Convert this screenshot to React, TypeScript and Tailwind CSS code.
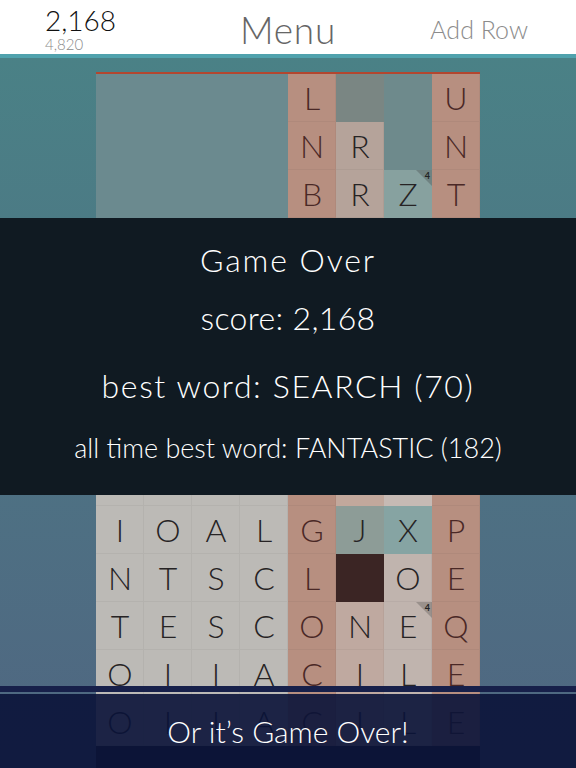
import React from "react";

type Cell = { l?: string; k: string; corner?: string };

const BG: Record<string, string> = {
  e: "bg-[#6b8a8f]",
  s: "bg-[#b78f80] shadow-[inset_-1px_-1px_0_rgba(0,0,0,0.04)]",
  r1: "bg-[#7a8683]",
  e2: "bg-[#6e8a8c]",
  rp: "bg-[#b5a39a] shadow-[inset_-1px_-1px_0_rgba(0,0,0,0.04)]",
  z: "bg-[#87a19f]",
  g: "bg-[#bcbab6] shadow-[inset_-1px_-1px_0_rgba(0,0,0,0.04)]",
  pk: "bg-[#bfa9a0] shadow-[inset_-1px_-1px_0_rgba(0,0,0,0.04)]",
  lg: "bg-[#c0b4ae] shadow-[inset_-1px_-1px_0_rgba(0,0,0,0.04)]",
  pk9: "bg-[#c2a89c]",
  lg9: "bg-[#c6bab4]",
  j: "bg-[#8d9c97]",
  x: "bg-[#86a4a3]",
  d: "bg-[#3b2524]",
};

const TXT: Record<string, string> = {
  s: "text-[#4a2826]",
  d: "text-[#4a2826]",
};

const c = (k: string, l?: string, corner?: string): Cell => ({ k, l, corner });

const rows: Cell[][] = [
  [c("e"), c("e"), c("e"), c("e"), c("s", "L"), c("r1"), c("e2"), c("s", "U")],
  [c("e"), c("e"), c("e"), c("e"), c("s", "N"), c("rp", "R"), c("e2"), c("s", "N")],
  [c("e"), c("e"), c("e"), c("e"), c("s", "B"), c("rp", "R"), c("z", "Z", "4"), c("s", "T")],
  [c("e"), c("e"), c("e"), c("e"), c("s"), c("e"), c("e"), c("s")],
  [c("e"), c("e"), c("e"), c("e"), c("s"), c("e"), c("e"), c("s")],
  [c("g"), c("g"), c("g"), c("g"), c("s"), c("e"), c("e"), c("s")],
  [c("g"), c("g"), c("g"), c("g"), c("s"), c("e"), c("e"), c("s")],
  [c("g"), c("g"), c("g"), c("g"), c("s"), c("pk9"), c("lg9"), c("s")],
  [c("g"), c("g"), c("g"), c("g"), c("s"), c("pk9"), c("lg9"), c("s")],
  [c("g", "I"), c("g", "O"), c("g", "A"), c("g", "L"), c("s", "G"), c("j", "J"), c("x", "X"), c("s", "P")],
  [c("g", "N"), c("g", "T"), c("g", "S"), c("g", "C"), c("s", "L"), c("d"), c("lg", "O"), c("s", "E")],
  [c("g", "T"), c("g", "E"), c("g", "S"), c("g", "C"), c("s", "O"), c("pk", "N"), c("lg", "E", "4"), c("s", "Q")],
  [c("g", "O"), c("g", "I"), c("g", "I"), c("g", "A"), c("s", "C"), c("pk", "I"), c("lg", "L"), c("s", "E")],
  [c("g", "O"), c("g", "I"), c("g", "I"), c("g", "A"), c("s", "C"), c("pk", "I"), c("lg", "L"), c("s", "E")],
];

function Tile({ cell }: { cell: Cell }) {
  return (
    <div className={`relative h-[48px] w-[48px] flex items-center justify-center ${BG[cell.k]}`}>
      {cell.l && (
        <span className={`text-[32px] leading-none font-light ${TXT[cell.k] ?? "text-[#262324]"}`}>{cell.l}</span>
      )}
      {cell.corner && (
        <>
          <div className="absolute top-0 right-0 w-[16px] h-[16px] bg-[rgba(40,40,40,0.25)] [clip-path:polygon(0_0,100%_0,100%_100%)]" />
          <span className="absolute top-[1px] right-[2px] text-[9px] leading-none font-bold text-[#222]">
            {cell.corner}
          </span>
        </>
      )}
    </div>
  );
}

export default function App() {
  return (
    <div className="w-[576px] h-[768px] overflow-hidden font-['Lato','Open_Sans',sans-serif] bg-white">
      <header className="h-[54px] bg-white grid grid-cols-[1fr_auto_1fr] items-center">
        <div className="pl-[45px] flex flex-col pt-[2px]">
          <span className="text-[28px] leading-[30px] font-light text-[#111]">2,168</span>
          <span className="text-[15px] leading-[15px] font-light text-[#8a8a8a] mt-[2px]">4,820</span>
        </div>
        <div className="text-[37px] leading-none font-light text-[#666] pt-[4px] tracking-[0.02em]">Menu</div>
        <div className="flex justify-end pr-[48px] pt-[4px]">
          <span className="text-[25px] leading-none font-light text-[#8c8c8c]">Add Row</span>
        </div>
      </header>
      <div className="h-[4px] bg-[#50a2ad]" />
      <main className="relative h-[710px] overflow-hidden bg-linear-to-b from-[#4a8186] to-[#4f6681]">
        <div className="mx-auto w-[384px] pt-[14px]">
          <div className="h-[2px] bg-[#b3462f]" />
          <div className="grid grid-cols-8">
            {rows.map((row, i) => row.map((cell, j) => <Tile key={`${i}-${j}`} cell={cell} />))}
          </div>
          <div className="h-[22px] bg-[#20202a]" />
        </div>

        <div className="absolute left-0 right-0 top-[160px] h-[277px] bg-[#101a22] flex flex-col items-center text-white font-light">
          <div className="mt-[22px] text-[32px] leading-[40px] tracking-[0.06em]">Game Over</div>
          <div className="mt-[18px] text-[32px] leading-[40px] tracking-[0.01em]">score: 2,168</div>
          <div className="mt-[28px] text-[32px] leading-[40px] tracking-[0.05em]">best word: SEARCH (70)</div>
          <div className="mt-[25px] text-[27px] leading-[34px]">all time best word: FANTASTIC (182)</div>
        </div>

        <div className="absolute left-0 right-0 top-[628px] bottom-0 flex flex-col">
          <div className="h-[6px] bg-[#17204a]" />
          <div className="h-[2px]" />
          <div className="flex-1 bg-[rgba(10,19,57,0.9)] flex items-center justify-center">
            <span className="text-white text-[30px] leading-none font-light">Or it’s Game Over!</span>
          </div>
        </div>
      </main>
    </div>
  );
}
